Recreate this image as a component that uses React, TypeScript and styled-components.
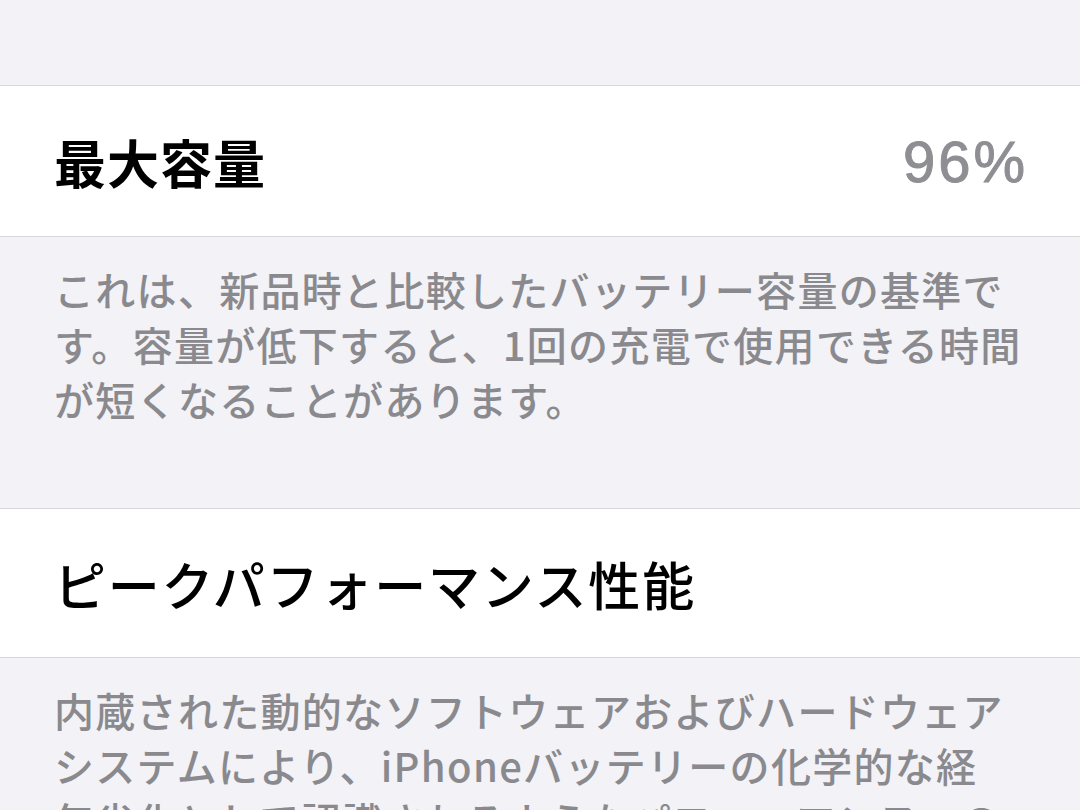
import React from 'react'
import styled, { createGlobalStyle } from 'styled-components'

const GlobalStyle = createGlobalStyle`
  html, body {
    margin: 0;
    padding: 0;
    background: #f2f2f7;
  }
  body {
    font-family: 'Noto Sans CJK JP', 'Noto Sans', sans-serif;
    -webkit-font-smoothing: antialiased;
  }
`

const Screen = styled.div`
  width: 1080px;
  height: 810px;
  overflow: hidden;
  background: #f2f2f7;
  display: flex;
  flex-direction: column;
`

const Spacer = styled.div<{ $h: number }>`
  height: ${(p) => p.$h}px;
  flex-shrink: 0;
`

const Cell = styled.div<{ $h: number }>`
  box-sizing: border-box;
  height: ${(p) => p.$h}px;
  flex-shrink: 0;
  background: #ffffff;
  border-top: 1px solid #d6d6db;
  border-bottom: 1px solid #d6d6db;
  padding: 0 55px 0 54px;
  display: flex;
  align-items: center;
  justify-content: space-between;
`

const Title = styled.span<{ $bold?: boolean; $spacing: number }>`
  font-size: 52px;
  font-weight: ${(p) => (p.$bold ? 700 : 500)};
  color: #000;
  letter-spacing: ${(p) => p.$spacing}px;
`

const Value = styled.span`
  font-family: 'Liberation Sans', Arial, sans-serif;
  font-size: 58px;
  color: #8e8e93;
  -webkit-text-stroke: 1px #8e8e93;
  letter-spacing: 3px;
  margin-right: -3px;
`

const Footer = styled.p<{ $bottom: number }>`
  margin: 0;
  flex-shrink: 0;
  padding: 25px 40px ${(p) => p.$bottom}px 54px;
  font-size: 40px;
  line-height: 55px;
  font-weight: 500;
  color: #8a8a8e;
  letter-spacing: 1.3px;
  white-space: nowrap;
`

export default function App() {
  return (
    <>
      <GlobalStyle />
      <Screen>
        <Spacer $h={85} />
        <Cell $h={152}>
          <Title $bold $spacing={1}>最大容量</Title>
          <Value>96%</Value>
        </Cell>
        <Footer $bottom={81}>
          これは、新品時と比較したバッテリー容量の基準で
          <br />
          す。容量が低下すると、1回の充電で使用できる時間
          <br />
          が短くなることがあります。
        </Footer>
        <Cell $h={150}>
          <Title $spacing={1.8}>ピークパフォーマンス性能</Title>
        </Cell>
        <Footer $bottom={25}>
          内蔵された動的なソフトウェアおよびハードウェア
          <br />
          システムにより、iPhoneバッテリーの化学的な経
          <br />
          年劣化として認識されるようなパフォーマンスへの
          <br />
          影響が緩和されます。
        </Footer>
      </Screen>
    </>
  )
}
